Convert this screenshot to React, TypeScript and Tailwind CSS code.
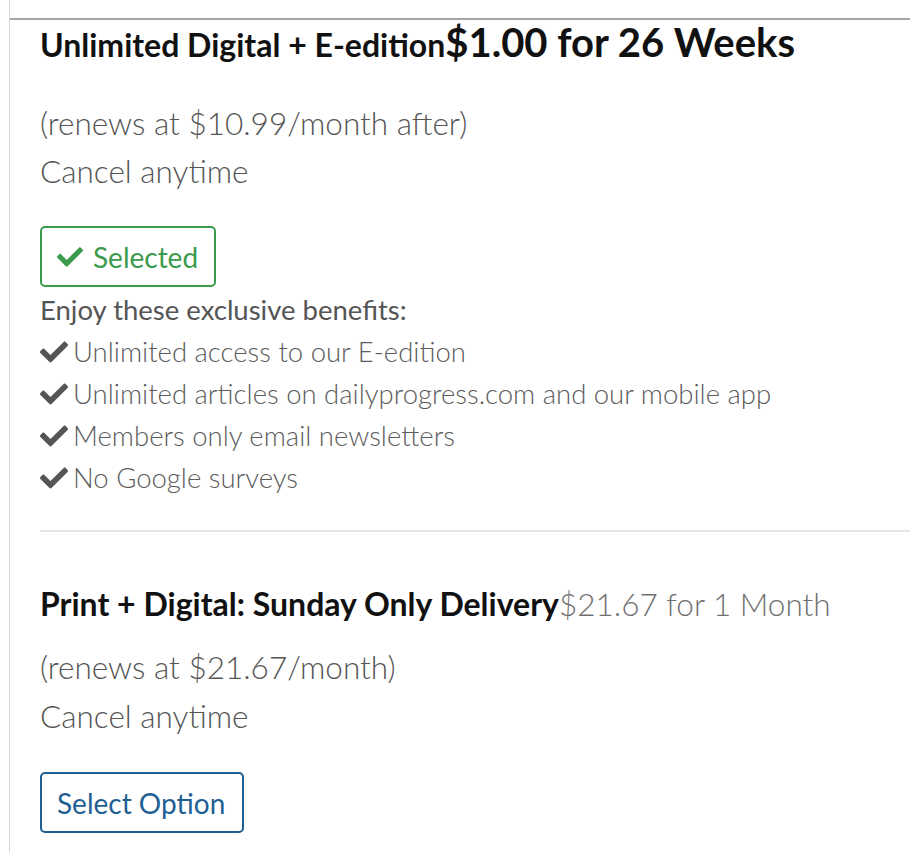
import { FaCheck } from 'react-icons/fa'

const benefits = [
  'Unlimited access to our E-edition',
  'Unlimited articles on dailyprogress.com and our mobile app',
  'Members only email newsletters',
  'No Google surveys',
]

export default function App() {
  return (
    <div className="min-h-screen bg-white font-['Lato',sans-serif]">
      <div className="ml-[9px] min-h-screen border-l border-[#d6d6d6] pt-[18px]">
        <div className="border-t-2 border-[#a6a6a6] pl-[30px]">
          {/* current plan */}
          <div className="flex items-baseline text-[#111]">
            <span className="text-[32px] font-bold leading-[44px]">Unlimited Digital + E-edition</span>
            <span className="text-[40px] font-bold leading-[44px]">$1.00 for 26 Weeks</span>
          </div>
          <div className="mt-[32px] text-[31.5px] font-light leading-[48px] text-[#555]">
            <p>(renews at $10.99/month after)</p>
            <p>Cancel anytime</p>
          </div>
          <button className="mt-[31px] flex h-[61px] items-center gap-[10px] rounded-[5px] border-2 border-[#3b9b4d] pl-[15px] pr-[16px] text-[28px] text-[#3b9b4d]">
            <FaCheck className="h-[26px] w-[26px]" />
            Selected
          </button>
          <p className="mt-[2px] text-[27.5px] leading-[42px] text-[#555]">Enjoy these exclusive benefits:</p>
          <ul className="text-[27.5px] font-light leading-[42px] text-[#5c5c5c]">
            {benefits.map(b => (
              <li key={b} className="flex items-center gap-[5px]">
                <FaCheck className="h-[28px] w-[28px] text-[#555]" />
                {b}
              </li>
            ))}
          </ul>
          <div className="mt-[31px] h-[2px] bg-[#e6e6e6]" />

          {/* next plan */}
          <div className="mt-[48px] flex items-baseline">
            <span className="text-[32px] font-bold leading-[48px] text-[#111]">Print + Digital: Sunday Only Delivery</span>
            <span className="text-[31.5px] font-light leading-[48px] text-[#707070]">$21.67 for 1 Month</span>
          </div>
          <div className="mt-[15px] text-[31.5px] font-light leading-[49px] text-[#555]">
            <p>(renews at $21.67/month)</p>
            <p>Cancel anytime</p>
          </div>
          <button className="mt-[31px] flex h-[61px] items-center rounded-[5px] border-2 border-[#1f5f93] pl-[15px] pr-[17px] text-[28px] text-[#1f5f93]">
            Select Option
          </button>
        </div>
      </div>
    </div>
  )
}
